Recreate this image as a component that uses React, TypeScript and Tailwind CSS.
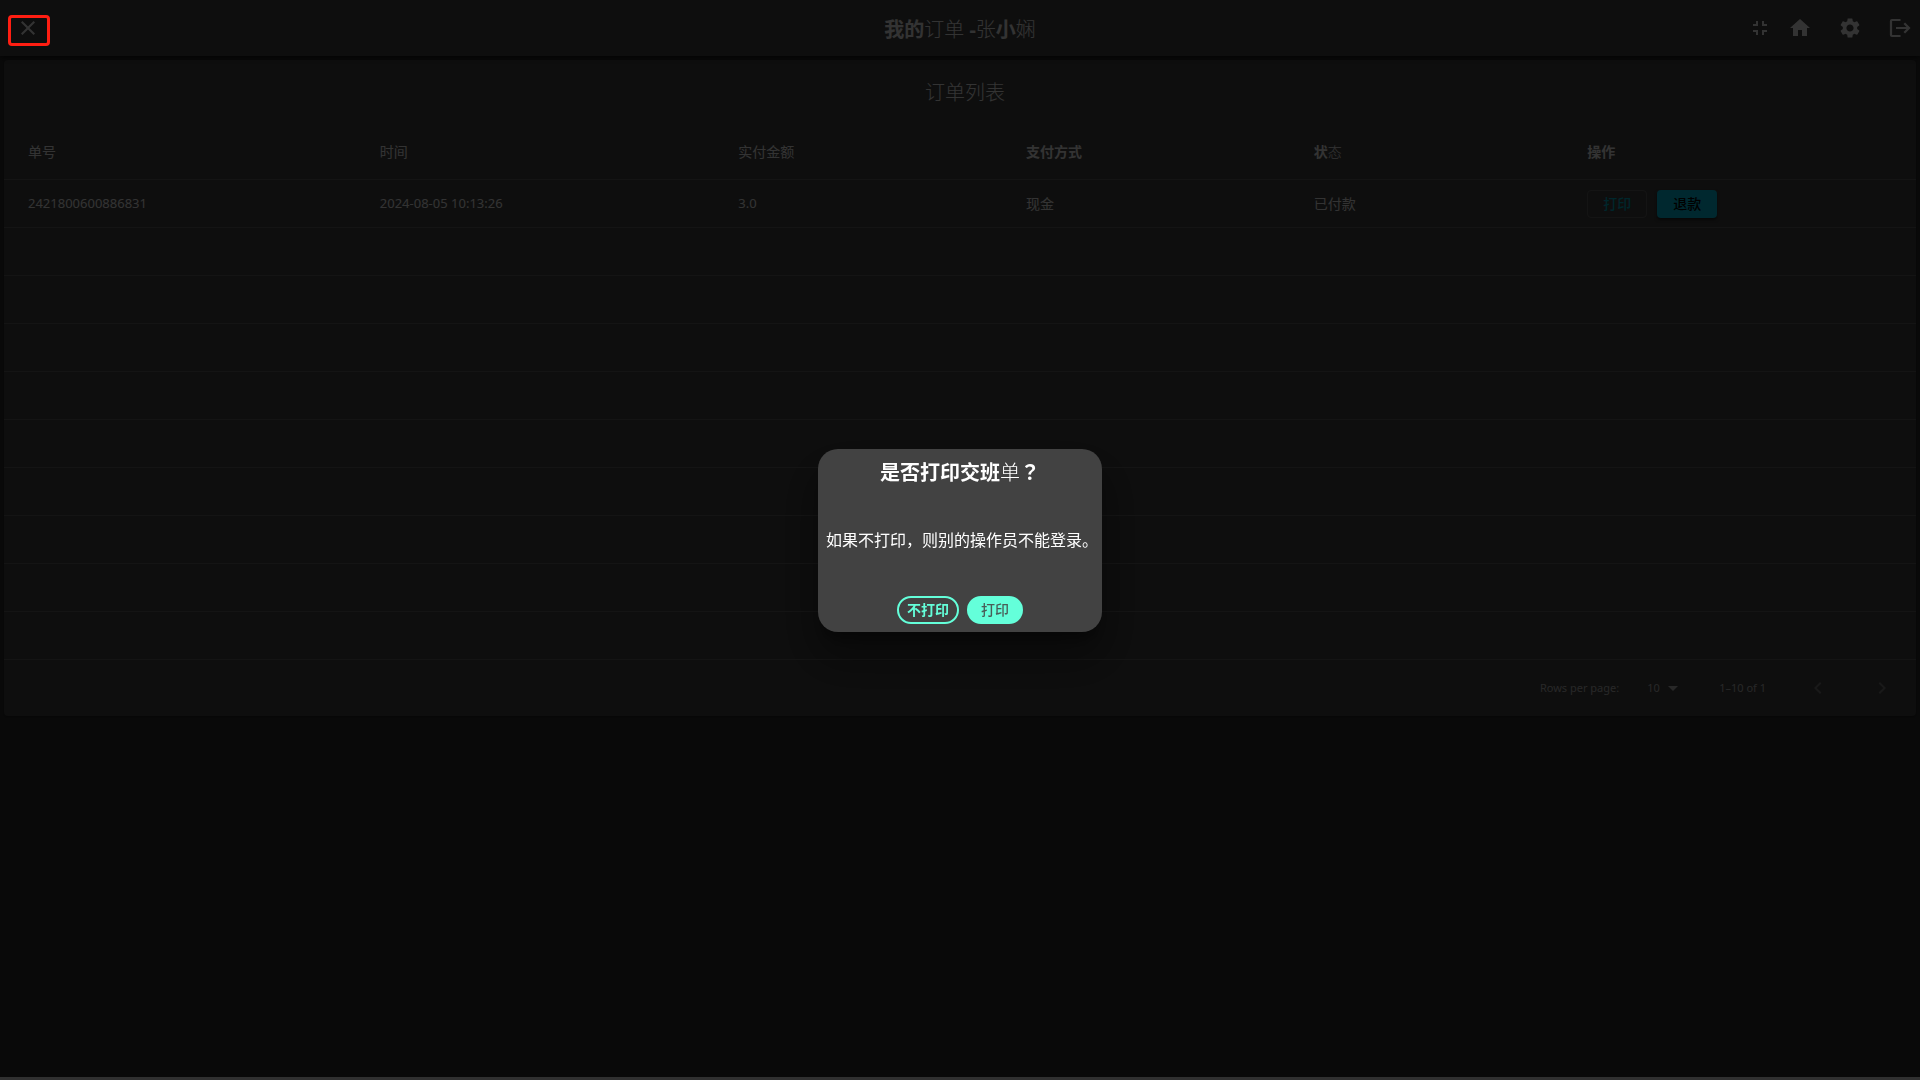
import type { ReactNode } from "react";
import { MdArrowDropDown, MdChevronLeft, MdChevronRight, MdClose, MdFullscreenExit, MdHome, MdSettings } from "react-icons/md";

const columns: { label: string; content: ReactNode; width: string }[] = [
  { label: "单号", content: <span className="font-normal">单号</span>, width: "w-[18.4%]" },
  { label: "时间", content: <span className="font-normal">时间</span>, width: "w-[18.75%]" },
  { label: "实付金额", content: <span className="font-normal">实付金额</span>, width: "w-[15.05%]" },
  { label: "支付方式", content: "支付方式", width: "w-[15.05%]" },
  { label: "状态", content: <>状<span className="font-light">态</span></>, width: "w-[14.3%]" },
  { label: "操作", content: "操作", width: "w-[18.45%]" },
];

const orders = [
  { id: "2421800600886831", time: "2024-08-05 10:13:26", amount: "3.0", method: "现金", status: "已付款" },
];

const emptyRows = Array.from({ length: 9 }, (_, i) => i);

function LogoutIcon() {
  return (
    <svg viewBox="0 0 24 24" className="size-6" fill="none" stroke="currentColor" strokeWidth="2.2">
      <path d="M12.5 4H4a1 1 0 0 0-1 1v14a1 1 0 0 0 1 1h8.5" />
      <path d="M8 12h13M16.3 7.3l4.7 4.7-4.7 4.7" />
    </svg>
  );
}

function TopBar() {
  return (
    <header className="relative flex h-14 items-center justify-between bg-[#474747] pr-2 pl-4 shadow-[0_2px_4px_rgba(0,0,0,0.5)]">
      <button type="button" aria-label="关闭" className="flex">
        <MdClose className="size-6" />
      </button>
      <h1 className="absolute inset-x-60 pt-1 text-center text-xl font-bold">
        我的<span className="font-light">订单</span> -<span className="font-light">张</span>小<span className="font-light">娴</span>
      </h1>
      <nav className="flex items-center">
        <button type="button" aria-label="退出全屏" className="mr-4 flex">
          <MdFullscreenExit className="size-6" />
        </button>
        <a href="#home" aria-label="主页" className="mr-6.5 flex">
          <MdHome className="size-6" />
        </a>
        <button type="button" aria-label="设置" className="mr-6.5 flex">
          <MdSettings className="size-6" />
        </button>
        <button type="button" aria-label="退出登录" className="flex">
          <LogoutIcon />
        </button>
      </nav>
    </header>
  );
}

function OrderTable() {
  return (
    <section className="m-1 rounded bg-[#454545] shadow-[0_1px_3px_rgba(0,0,0,0.4)]">
      <h2 className="flex h-16 items-center justify-center pt-0.5 pl-2.5 text-xl font-light">订单列表</h2>
      <table className="w-full table-fixed border-separate border-spacing-0 text-left text-sm">
        <thead>
          <tr className="h-14">
            {columns.map((column) => (
              <th key={column.label} scope="col" className={`border-b border-[#666666] px-6 font-bold ${column.width}`}>
                {column.content}
              </th>
            ))}
          </tr>
        </thead>
        <tbody>
          {orders.map((order) => (
            <tr key={order.id} className="h-12 *:border-b *:border-[#666666] *:px-6">
              <td className="text-[13px]">{order.id}</td>
              <td className="text-[13px]">{order.time}</td>
              <td className="text-[13px]">{order.amount}</td>
              <td>{order.method}</td>
              <td>{order.status}</td>
              <td>
                <div className="flex gap-2.5">
                  <button type="button" className="h-7 w-15 rounded border border-[#666666] font-medium text-[#00bcd4]">
                    打印
                  </button>
                  <button type="button" className="h-7 w-15 rounded bg-[#00c8e8] font-medium text-black shadow-[0_2px_3px_rgba(0,0,0,0.5)]">
                    退款
                  </button>
                </div>
              </td>
            </tr>
          ))}
          {emptyRows.map((row) => (
            <tr key={row} className="h-12">
              <td colSpan={6} className="border-b border-[#666666]" />
            </tr>
          ))}
        </tbody>
      </table>
      <footer className="flex h-14 items-center justify-end pr-[22px] text-[11px] text-white/70">
        <label htmlFor="page-size">Rows per page:</label>
        <div className="relative ml-7 flex items-center">
          <select id="page-size" defaultValue="10" className="w-9 appearance-none bg-transparent">
            <option>10</option>
          </select>
          <MdArrowDropDown className="pointer-events-none absolute left-3.5 size-6" />
        </div>
        <span className="ml-9">1–10 of 1</span>
        <button type="button" disabled aria-label="上一页" className="ml-10 flex text-white/30">
          <MdChevronLeft className="size-6" />
        </button>
        <button type="button" disabled aria-label="下一页" className="ml-10 flex text-white/30">
          <MdChevronRight className="size-6" />
        </button>
      </footer>
    </section>
  );
}

function PrintDialog() {
  return (
    <div
      role="dialog"
      aria-modal="true"
      aria-labelledby="dialog-title"
      className="flex flex-col items-center rounded-[20px] bg-[#424242] py-2 shadow-[0_11px_15px_-7px_rgba(0,0,0,0.4),0_24px_38px_3px_rgba(0,0,0,0.35)]"
    >
      <h2 id="dialog-title" className="text-xl leading-[30px] font-bold">
        是否打印交班<span className="font-light">单</span>
        <span className="font-['Noto_Sans_CJK_JP',sans-serif]" lang="ja">？</span>
      </h2>
      <p className="mt-10 mb-11 pr-1 pl-2 text-base leading-6">如果不打印，则别的操作员不能登录。</p>
      <div className="flex gap-2 text-sm">
        <button type="button" className="h-7 rounded-full border-2 border-[#64ffda] px-2 font-bold text-[#64ffda]">
          不打印
        </button>
        <button type="button" className="h-7 rounded-full bg-[#64ffda] px-3.5 font-medium text-[#4a5c57]">
          打印
        </button>
      </div>
    </div>
  );
}

export default function App() {
  return (
    <div lang="zh-CN" className="min-h-screen bg-[#303030] font-['Noto_Sans','Noto_Sans_CJK_SC',sans-serif] text-white">
      <TopBar />
      <OrderTable />
      <div className="fixed inset-x-0 top-0 bottom-[3px] flex items-center justify-center bg-black/80 pt-[3px]">
        <PrintDialog />
      </div>
      <div className="fixed top-[15px] left-2 h-[31px] w-[42px] rounded border-3 border-[#ff1e12]" />
    </div>
  );
}
